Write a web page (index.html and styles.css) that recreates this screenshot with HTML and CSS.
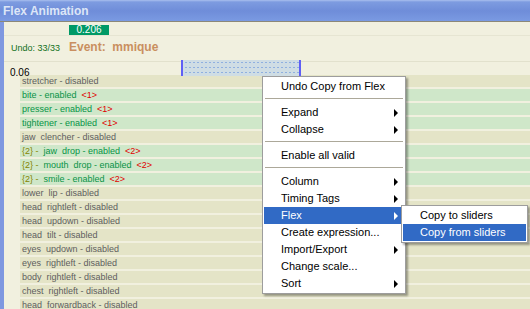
FILE: index.html
```html
<!DOCTYPE html>
<html lang="en">
<head>
    <meta charset="UTF-8">
    <title>Flex Animation</title>
    <link rel="stylesheet" href="styles.css">
</head>
<body>
    <div class="window">
        <div class="titlebar">Flex Animation</div>
        <div class="frame">
            <div class="gauge-row">
                <div class="gauge">0.206</div>
            </div>
            <div class="status">
                <span class="undo">Undo: 33/33</span>
                <span class="event">Event:  mmique</span>
            </div>
            <div class="timeline">
                <span class="time">0.06</span>
            </div>
            <ul class="tracks">
                <li class="off">stretcher - disabled</li>
                <li class="on">bite - enabled  <span class="tag">&lt;1&gt;</span></li>
                <li class="on">presser - enabled  <span class="tag">&lt;1&gt;</span></li>
                <li class="on">tightener - enabled  <span class="tag">&lt;1&gt;</span></li>
                <li class="off">jaw  clencher - disabled</li>
                <li class="on"><span class="group">{2} -</span>  jaw  drop - enabled  <span class="tag">&lt;2&gt;</span></li>
                <li class="on"><span class="group">{2} -</span>  mouth  drop - enabled  <span class="tag">&lt;2&gt;</span></li>
                <li class="on"><span class="group">{2} -</span>  smile - enabled  <span class="tag">&lt;2&gt;</span></li>
                <li class="off">lower  lip - disabled</li>
                <li class="off">head  rightleft - disabled</li>
                <li class="off">head  updown - disabled</li>
                <li class="off">head  tilt - disabled</li>
                <li class="off">eyes  updown - disabled</li>
                <li class="off">eyes  rightleft - disabled</li>
                <li class="off">body  rightleft - disabled</li>
                <li class="off">chest  rightleft - disabled</li>
                <li class="off">head  forwardback - disabled</li>
            </ul>
        </div>

        <!-- selected time range on the timeline -->
        <div class="marker"></div>

        <div class="menu main-menu">
            <div class="item">Undo Copy from Flex</div>
            <div class="sep"></div>
            <div class="item sub">Expand</div>
            <div class="item sub">Collapse</div>
            <div class="sep"></div>
            <div class="item">Enable all valid</div>
            <div class="sep"></div>
            <div class="item sub">Column</div>
            <div class="item sub">Timing Tags</div>
            <div class="item sub active">Flex</div>
            <div class="item">Create expression...</div>
            <div class="item sub">Import/Export</div>
            <div class="item">Change scale...</div>
            <div class="item sub">Sort</div>
        </div>

        <div class="menu submenu">
            <div class="item">Copy to sliders</div>
            <div class="item active">Copy from sliders</div>
        </div>
    </div>
</body>
</html>
```

FILE: styles.css
```css
body {
    margin: 0;
    padding: 0;
    font-family: "Liberation Sans", Arial, sans-serif;
    background-color: #f1f0df;
    overflow: hidden;
}

.window {
    position: relative;
    width: 530px;
    height: 309px;
    overflow: hidden;
}

.titlebar {
    height: 21px;
    padding-left: 3px;
    line-height: 22px;
    font-size: 12px;
    font-weight: bold;
    color: #dde6f7;
    background: linear-gradient(#a9bfee 0, #7d9be0 2px, #6f8dd9 11px, #7a9ae2 21px);
    border-bottom: 1px solid #8b8878;
}

.frame {
    height: 287px;
    border-left: 4px solid #7f98e0;
    background-color: #f1f0df;
}

.gauge-row {
    height: 10px;
    padding-top: 3px;
    padding-left: 65px;
    border-bottom: 1px solid #e6e5d2;
}

.gauge {
    width: 40px;
    height: 10px;
    line-height: 10px;
    font-size: 10px;
    text-align: center;
    color: #fff;
    background-color: #009966;
}

.status {
    height: 25px;
    padding-left: 7px;
    display: flex;
    align-items: baseline;
    line-height: 23px;
}

.undo {
    width: 58px;
    font-size: 9px;
    color: #11711c;
}

.event {
    font-size: 12px;
    font-weight: bold;
    color: #c98f60;
    white-space: pre;
}

.timeline {
    height: 13px;
    padding-left: 6px;
    border-top: 1px solid #e2e1cd;
}

.time {
    font-size: 10px;
    line-height: 15px;
    color: #000;
}

.tracks {
    list-style: none;
    margin: 0 0 0 16px;
    padding: 0;
}

.tracks li {
    height: 12px;
    margin-bottom: 2px;
    padding-left: 2px;
    line-height: 12px;
    font-size: 9px;
    white-space: pre;
}

.tracks .off {
    background-color: #e4e4c7;
    color: #5e5e5e;
}

.tracks .on {
    background-color: #cfe7c9;
    color: #079346;
}

.tag {
    color: #e00000;
}

.group {
    color: #858500;
}

.marker {
    position: absolute;
    left: 181px;
    top: 60px;
    width: 116px;
    height: 16px;
    border-left: 2px solid #5f5ff5;
    border-right: 2px solid #5f5ff5;
    background-color: #cfdde4;
    background-image: radial-gradient(circle, #8fb0e0 0.7px, transparent 0.8px);
    background-size: 4px 5px;
    background-position: 1px 0;
}

.menu {
    position: absolute;
    box-sizing: border-box;
    padding: 1px;
    background-color: #fff;
    border: 1px solid #9d9d9d;
    box-shadow: 2px 2px 2px rgba(0, 0, 0, 0.35);
    font-size: 11px;
    color: #000;
}

.main-menu {
    left: 262px;
    top: 76px;
    width: 144px;
}

.submenu {
    left: 401px;
    top: 205px;
    width: 127px;
}

.item {
    position: relative;
    height: 17px;
    line-height: 17px;
    padding-left: 17px;
    white-space: nowrap;
}

.item.active {
    background-color: #316ac5;
    color: #fff;
}

.item.sub::after {
    content: "";
    position: absolute;
    right: 6px;
    top: 5px;
    border-left: 4px solid #000;
    border-top: 4px solid transparent;
    border-bottom: 4px solid transparent;
}

.item.sub.active::after {
    border-left-color: #fff;
}

.sep {
    height: 1px;
    margin: 3px 1px 5px;
    background-color: #aca899;
}
```
